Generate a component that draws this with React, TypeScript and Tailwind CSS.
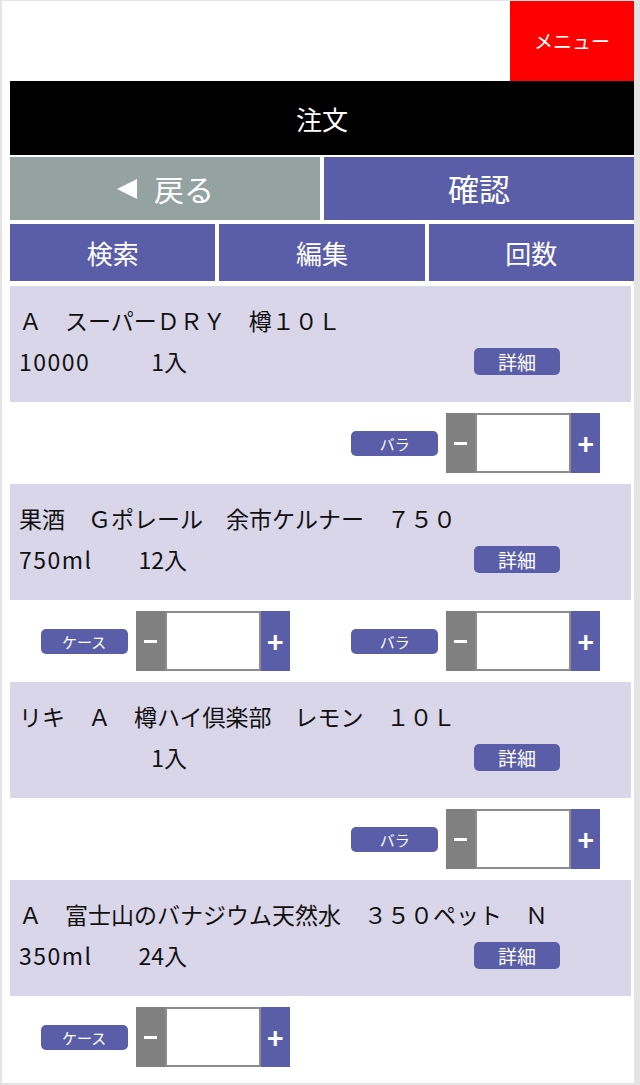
import React from 'react';

type Item = {
  name: string;
  size: string;
  qty: string;
  case: boolean;
  bara: boolean;
};

const items: Item[] = [
  { name: 'Ａ　スーパーＤＲＹ　樽１０Ｌ', size: '10000', qty: '1入', case: false, bara: true },
  { name: '果酒　Ｇポレール　余市ケルナー　７５０', size: '750ml', qty: '12入', case: true, bara: true },
  { name: 'リキ　Ａ　樽ハイ倶楽部　レモン　１０Ｌ', size: '', qty: '1入', case: false, bara: true },
  { name: 'Ａ　富士山のバナジウム天然水　３５０ペット　Ｎ', size: '350ml', qty: '24入', case: true, bara: false },
];

function Stepper({ label }: { label: string }) {
  return (
    <div className="flex items-center gap-[8px]">
      <button className="w-[87px] h-[25px] rounded-[5px] bg-[#5a5ea8] text-white text-[15px] leading-none">
        {label}
      </button>
      <div className="flex h-[60px]">
        <div className="w-[29px] bg-[#808080] flex items-center justify-center">
          <span className="block w-[13px] h-[3px] bg-white" />
        </div>
        <div className="w-[96px] bg-white border-2 border-[#8c8c8c]" />
        <div className="w-[29px] bg-[#5a5ea8] flex items-center justify-center text-white text-[28px] font-bold leading-none">
          +
        </div>
      </div>
    </div>
  );
}

function ItemBlock({ item }: { item: Item }) {
  return (
    <div>
      <div className="bg-[#d9d6ea] h-[116px] pt-[14px] pl-[9px] pr-[71px] text-[23px] leading-[41px] text-[#111]">
        <div className="whitespace-nowrap">{item.name}</div>
        <div className="flex items-center justify-between">
          <div className="flex">
            <span className="w-[110px] tracking-[1.5px]">{item.size}</span>
            <span className="w-[58px] text-right">{item.qty}</span>
          </div>
          <button className="w-[86px] h-[27px] rounded-[5px] bg-[#5a5ea8] text-white text-[19px] leading-none">
            詳細
          </button>
        </div>
      </div>
      <div className="grid grid-cols-2 h-[82px]">
        <div className="flex items-center justify-center">{item.case && <Stepper label="ケース" />}</div>
        <div className="flex items-center justify-center">{item.bara && <Stepper label="バラ" />}</div>
      </div>
    </div>
  );
}

export default function App() {
  return (
    <div
      className="w-[640px] h-[1085px] bg-white border-t border-l-2 border-r-[6px] border-b-2 border-[#e4e4e4] overflow-hidden"
      style={{ fontFamily: '"Noto Sans CJK JP", "Noto Sans", sans-serif' }}
    >
      <div className="pl-[8px]">
        {/* Header */}
        <div className="flex justify-end h-[80px]">
          <button className="w-[124px] bg-[#ff0000] text-white text-[19px]">メニュー</button>
        </div>
        <div className="bg-black text-white text-[26px] h-[74px] flex items-center justify-center">注文</div>

        {/* Back / confirm */}
        <div className="flex gap-[4px] mt-[2px] h-[63px]">
          <button className="flex-1 bg-[#95a3a0] text-white text-[30px] flex items-center justify-center gap-[16px]">
            <svg width="22" height="22" viewBox="0 0 22 22">
              <polygon points="21,1 21,21 1,11" fill="white" />
            </svg>
            <span>戻る</span>
          </button>
          <button className="flex-1 bg-[#5a5ea8] text-white text-[31px]">確認</button>
        </div>

        {/* Tabs */}
        <div className="grid grid-cols-3 gap-[4px] mt-[4px] h-[57px]">
          <button className="bg-[#5a5ea8] text-white text-[26px]">検索</button>
          <button className="bg-[#5a5ea8] text-white text-[26px]">編集</button>
          <button className="bg-[#5a5ea8] text-white text-[26px]">回数</button>
        </div>

        {/* Items */}
        <div className="mt-[5px] pr-[3px]">
          {items.map((item, i) => (
            <ItemBlock key={i} item={item} />
          ))}
        </div>
      </div>
    </div>
  );
}
